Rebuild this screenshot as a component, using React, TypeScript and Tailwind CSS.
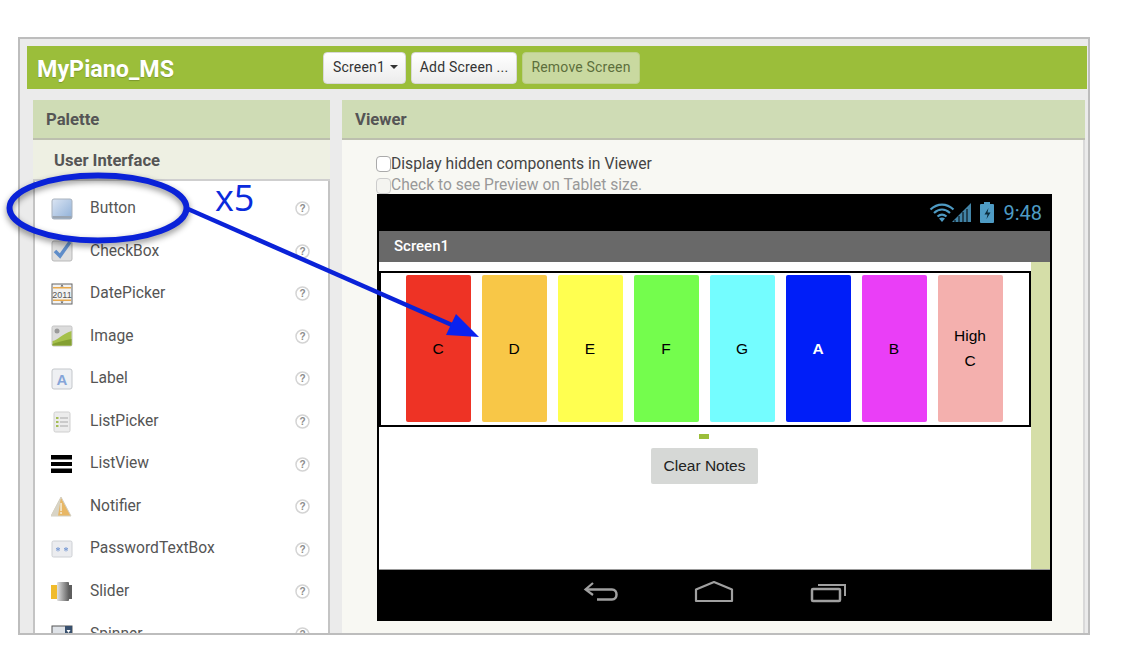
import type { ReactNode } from "react";

const ROBOTO = "font-['Roboto',sans-serif]";
const ARIAL = "font-['Liberation_Sans',Arial,sans-serif]";

const Icon = ({ children }: { children: ReactNode }) => (
  <svg width="22" height="22" viewBox="0 0 22 22" className="shrink-0">
    {children}
  </svg>
);

const ButtonIcon = () => (
  <Icon>
    <defs>
      <linearGradient id="btn" x1="0" y1="0" x2="1" y2="1">
        <stop offset="0" stopColor="#dbe5f3" />
        <stop offset="1" stopColor="#8fb0d8" />
      </linearGradient>
    </defs>
    <rect x="1" y="1" width="20" height="20" rx="2" fill="url(#btn)" stroke="#a9b2bd" />
    <rect x="1.5" y="18" width="19" height="2.5" fill="#9aa5b2" />
  </Icon>
);

const CheckBoxIcon = () => (
  <Icon>
    <rect x="1" y="1" width="20" height="20" rx="2" fill="#dedede" stroke="#b9b9b9" />
    <path d="M4 11l5 5 10-14" fill="none" stroke="#5f8dc9" strokeWidth="3.500" />
  </Icon>
);

const DatePickerIcon = () => (
  <Icon>
    <rect x="1" y="1" width="20" height="20" fill="#f2f2f2" stroke="#666" />
    <rect x="2" y="4" width="18" height="1.5" fill="#e9a94b" />
    <rect x="2" y="16.5" width="18" height="1.5" fill="#e9a94b" />
    <path d="M9.5 3.5h3l-1.5-2zM9.5 18.5h3l-1.500 2z" fill="#555" />
    <text x="11" y="15" textAnchor="middle" fontSize="9" fontFamily="Liberation Sans" fill="#555">
      2011
    </text>
  </Icon>
);

const ImageIcon = () => (
  <Icon>
    <rect x="1" y="1" width="20" height="20" rx="1.500" fill="#dcdcdc" stroke="#c4c4c4" />
    <circle cx="6" cy="6" r="2.500" fill="#9a9a9a" />
    <path d="M1.500 16C7 15 11 9 20.500 6v14.500h-19z" fill="#a5c04a" />
    <path d="M1.500 19c6-2 12-4 19-5v6.500h-19z" fill="#84a032" />
  </Icon>
);

const LabelIcon = () => (
  <Icon>
    <rect x="1" y="1" width="20" height="20" rx="2" fill="#eef0f3" stroke="#c4c7cb" />
    <text x="11" y="17" textAnchor="middle" fontSize="15" fontWeight="700" fontFamily="Liberation Sans" fill="#86a5d8">
      A
    </text>
  </Icon>
);

const ListPickerIcon = () => (
  <Icon>
    <rect x="3" y="1" width="16" height="20" rx="1.500" fill="#ececec" stroke="#cfcfcf" />
    {[6, 10, 14].map((y) => (
      <g key={y}>
        <rect x="5" y={y} width="2.500" height="2" fill="#a5bd55" />
        <rect x="9" y={y + 0.5} width="8" height="1" fill="#a8a8a8" />
      </g>
    ))}
  </Icon>
);

const ListViewIcon = () => (
  <Icon>
    <rect x="0" y="2" width="21" height="4.500" fill="#000" />
    <rect x="0" y="9" width="21" height="4" fill="#000" />
    <rect x="0" y="15.500" width="21" height="4.500" fill="#000" />
  </Icon>
);

const NotifierIcon = () => (
  <Icon>
    <path d="M10 1L20 20H0z" fill="#e8b765" stroke="#d2cfc3" />
    <path d="M10 1L0 20h7z" fill="#d8d4c6" />
    <rect x="9.300" y="7" width="1.500" height="8" fill="#f4ecd6" />
    <rect x="9.300" y="16" width="1.500" height="2" fill="#f4ecd6" />
  </Icon>
);

const PasswordIcon = () => (
  <Icon>
    <rect x="1" y="3" width="20" height="16" rx="1.500" fill="#ebecef" stroke="#cdd0d4" />
    <path d="M7 9v4.500M5 10.200l4 2.100M9 10.200l-4 2.100M15 9v4.500M13 10.200l4 2.100M17 10.200l-4 2.100" stroke="#7f9fd6" strokeWidth="1" />
  </Icon>
);

const SliderIcon = () => (
  <Icon>
    <defs>
      <linearGradient id="sld" x1="0" y1="0" x2="1" y2="0">
        <stop offset="0" stopColor="#e2e2e2" />
        <stop offset="1" stopColor="#5e5e5e" />
      </linearGradient>
    </defs>
    <rect x="0" y="4" width="7" height="14" fill="#f0bb2c" />
    <rect x="17" y="4" width="4" height="14" fill="#5e5e5e" />
    <rect x="6" y="1" width="12" height="19" rx="1" fill="url(#sld)" />
  </Icon>
);

const SpinnerIcon = () => (
  <Icon>
    <rect x="1" y="3" width="20" height="16" fill="#dfe3e8" stroke="#555" />
    <rect x="14" y="3" width="7" height="16" fill="#38506e" />
    <path d="M15.500 7h4l-2 3z" fill="#fff" />
  </Icon>
);

const HelpIcon = () => (
  <svg width="15" height="15" viewBox="0 0 15 15" className="shrink-0">
    <circle cx="7.500" cy="7.500" r="6.500" fill="#fff" stroke="#d4d4d4" strokeWidth="1.500" />
    <text x="7.500" y="11" textAnchor="middle" fontSize="10" fontWeight="700" fontFamily="Liberation Sans" fill="#8c8c8c">
      ?
    </text>
  </svg>
);

const palette = [
  { name: "Button", icon: <ButtonIcon /> },
  { name: "CheckBox", icon: <CheckBoxIcon /> },
  { name: "DatePicker", icon: <DatePickerIcon /> },
  { name: "Image", icon: <ImageIcon /> },
  { name: "Label", icon: <LabelIcon /> },
  { name: "ListPicker", icon: <ListPickerIcon /> },
  { name: "ListView", icon: <ListViewIcon /> },
  { name: "Notifier", icon: <NotifierIcon /> },
  { name: "PasswordTextBox", icon: <PasswordIcon /> },
  { name: "Slider", icon: <SliderIcon /> },
  { name: "Spinner", icon: <SpinnerIcon /> },
];

const TopButton = ({ children, width }: { children: ReactNode; width: string }) => (
  <div
    className={`${width} flex h-[32px] items-center justify-center rounded-[4px] border border-[#d8d8d8] bg-gradient-to-b from-white to-[#ececec] pb-[1px] text-[14px] tracking-[0.2px] text-[#333]`}
  >
    {children}
  </div>
);

const PanelHeader = ({ children }: { children: ReactNode }) => (
  <div className="flex h-[40px] items-center border-b-2 border-[#bcbfae] bg-[#cfdcb5] pl-[13px] pt-[2px] text-[16.700px] font-bold text-[#555]">
    {children}
  </div>
);

const PianoKey = ({ className, children }: { className: string; children: ReactNode }) => (
  <div className={`flex h-[147px] w-[65px] flex-col items-center justify-center rounded-[2px] text-[15.500px] leading-[25px] ${className}`}>
    {children}
  </div>
);

function StatusIcons() {
  return (
    <svg width="66" height="24" viewBox="0 0 66 24" className="mr-[8px]">
      <g fill="none" stroke="#4e9bc4" strokeWidth="2.200">
        <path d="M1.500 8.500c7-6.500 16-6.500 23 0" />
        <path d="M5 12c5-4.500 11-4.500 16 0" />
        <path d="M8.500 15.500c3-2.500 6-2.500 9 0" />
      </g>
      <path d="M13 21l-3-3.500c2-1.300 4-1.300 6 0z" fill="#4e9bc4" />
      <path d="M23 21L42 2v19z" fill="#4e9bc4" opacity="0.85" />
      <path d="M26 21v-2M30 21v-6M34 21v-10M38 21v-13" stroke="#000" strokeWidth="1" />
      <rect x="51" y="3" width="14" height="19" rx="1" fill="#4e9bc4" />
      <rect x="55" y="1" width="6" height="2.500" fill="#4e9bc4" />
      <path d="M59.500 7l-4 6.500h3l-1 4.500 4-6.500h-3z" fill="#0c2c3c" />
    </svg>
  );
}

function NavIcons() {
  return (
    <div className="flex h-[51px] items-start pl-[204px] pt-[10px]">
      <svg width="36" height="24" viewBox="0 0 36 24" className="mr-[75px]">
        <path d="M10 3L2.500 9.500 10 15" fill="none" stroke="#a0a0a0" strokeWidth="2.200" />
        <path d="M3 9.500h26c6 0 6 10 0 10H14" fill="none" stroke="#a0a0a0" strokeWidth="2.500" />
      </svg>
      <svg width="40" height="24" viewBox="0 0 40 24" className="mr-[76px]">
        <path d="M2 21V9.500L20 2l18 7.500V21z" fill="none" stroke="#a0a0a0" strokeWidth="2.200" strokeLinejoin="round" />
      </svg>
      <svg width="38" height="24" viewBox="0 0 38 24">
        <rect x="2" y="9" width="28" height="12" rx="1" fill="none" stroke="#a0a0a0" strokeWidth="2.500" />
        <path d="M8 5h27v11" fill="none" stroke="#a0a0a0" strokeWidth="2" />
      </svg>
    </div>
  );
}

export default function App() {
  return (
    <div className={`relative h-[656px] w-[1126px] overflow-hidden bg-white ${ROBOTO}`}>
      <div className="pl-[18px] pt-[37px]">
        <div className="h-[598px] w-[1072px] overflow-hidden border-2 border-[#bdbdbd] bg-[#ebebeb] pl-[7px] pt-[7px]">
          <div className="mr-[1px] flex h-[43px] items-center bg-[#9bbe3a] pl-[10px]">
            <div className="w-[286px] pt-[4px] text-[23.300px] font-bold text-white [text-shadow:0_1px_1px_rgba(0,0,0,0.2)]">
              MyPiano_MS
            </div>
            <div className="flex gap-[5px]">
              <TopButton width="w-[83px]">
                <span className="ml-[2px]">Screen1</span>
                <span className="ml-[5px] h-0 w-0 border-x-[4px] border-t-[4px] border-x-transparent border-t-[#333]" />
              </TopButton>
              <TopButton width="w-[106px]">Add Screen ...</TopButton>
              <div className="flex h-[32px] w-[118px] items-center justify-center rounded-[4px] border border-[#bccf8a] bg-[#c9d9a0] pb-[1px] text-[14px] tracking-[0.2px] text-[#5d6f3c]">
                Remove Screen
              </div>
            </div>
          </div>

          <div className="mt-[11px] flex">
            <div className="ml-[6px] w-[297px] shrink-0">
              <PanelHeader>Palette</PanelHeader>
              <div className="flex h-[41px] items-center border-b-2 border-[#cfcfcf] bg-[#eef0e3] pl-[21px] pt-[4px] text-[16.600px] font-bold text-[#555]">
                User Interface
              </div>
              <div className="h-[460px] border-x-2 border-[#c4c4c4] bg-white pt-[6.500px]">
                {palette.map((item) => (
                  <div key={item.name} className="flex h-[42.550px] items-center pl-[16px]">
                    {item.icon}
                    <div className="ml-[17px] w-[205px] text-[15.600px] text-[#555]">{item.name}</div>
                    <HelpIcon />
                  </div>
                ))}
              </div>
            </div>

            <div className="ml-[12px] w-[743px] shrink-0">
              <PanelHeader>Viewer</PanelHeader>
              <div className="h-[500px] border-r-2 border-[#d9d9d9] bg-[#f8f8f3] pl-[35px] pt-[15px]">
                <div className="-ml-[1px] flex h-[18px] items-center text-[15.700px] text-[#444]">
                  <span className="h-[16px] w-[15px] rounded-[4px] border border-[#aaa] bg-white" />
                  Display hidden components in Viewer
                </div>
                <div className="-ml-[1px] mt-[4px] flex h-[18px] items-center text-[15.600px] text-[#999]">
                  <span className="h-[16px] w-[15px] rounded-[4px] border border-[#ccc] bg-[#f4f4f0]" />
                  Check to see Preview on Tablet size.
                </div>

                <div className="-mt-[1px] h-[427px] w-[675px] bg-black px-[2px]">
                  <div className="flex h-[37px] items-center justify-end">
                    <StatusIcons />
                    <span className="mr-[8px] text-[20px] text-[#4e9bc4]">9:48</span>
                  </div>
                  <div className="flex h-[31px] items-center bg-[#696969] pl-[15px] text-[15px] font-medium text-white">
                    Screen1
                  </div>
                  <div className={`flex h-[308px] border-b border-[#999] ${ARIAL}`}>
                    <div className="w-[652px] bg-white pt-[9px]">
                      <div className="flex h-[156px] gap-[11px] border-[2.500px] border-black pl-[24.500px] pt-[1.500px] text-black">
                        <PianoKey className="bg-[#ee3325]">C</PianoKey>
                        <PianoKey className="bg-[#f8c747]">D</PianoKey>
                        <PianoKey className="bg-[#ffff50]">E</PianoKey>
                        <PianoKey className="bg-[#74fd4d]">F</PianoKey>
                        <PianoKey className="bg-[#74fdff]">G</PianoKey>
                        <PianoKey className="bg-[#001ef8] font-bold text-white">A</PianoKey>
                        <PianoKey className="bg-[#ea3ef7]">B</PianoKey>
                        <PianoKey className="bg-[#f4b0ae]">
                          <span>High</span>
                          <span>C</span>
                        </PianoKey>
                      </div>
                      <div className="ml-[320px] mt-[7px] h-[5px] w-[10px] bg-[#9bbe3a]" />
                      <div className="ml-[272px] mt-[9px] flex h-[36px] w-[107px] items-center justify-center rounded-[2px] bg-[#d6d8d6] text-[15.500px] text-[#222]">
                        Clear Notes
                      </div>
                    </div>
                    <div className="w-[19px] bg-[#d5dea8]" />
                  </div>
                  <NavIcons />
                </div>
              </div>
            </div>
          </div>
        </div>
      </div>

      {/* annotation drawn on top of the screenshot */}
      <svg width="1126" height="656" viewBox="0 0 1126 656" className="absolute left-0 top-0">
        <ellipse
          cx="98"
          cy="208"
          rx="88.500"
          ry="32.500"
          fill="none"
          stroke="#0a22d8"
          strokeWidth="6"
          className="drop-shadow-[0_3px_3px_rgba(0,0,0,0.45)]"
        />
        <path d="M188 209L452 325" stroke="#0a22d8" strokeWidth="4.500" fill="none" />
        <path d="M479 337L456 314L446 335z" fill="#0a22f0" />
      </svg>
      <div className="absolute left-[215px] top-[174px] font-['Open_Sans',sans-serif] text-[36px] leading-[48px] text-[#0a2bdc]">
        x5
      </div>
    </div>
  );
}
